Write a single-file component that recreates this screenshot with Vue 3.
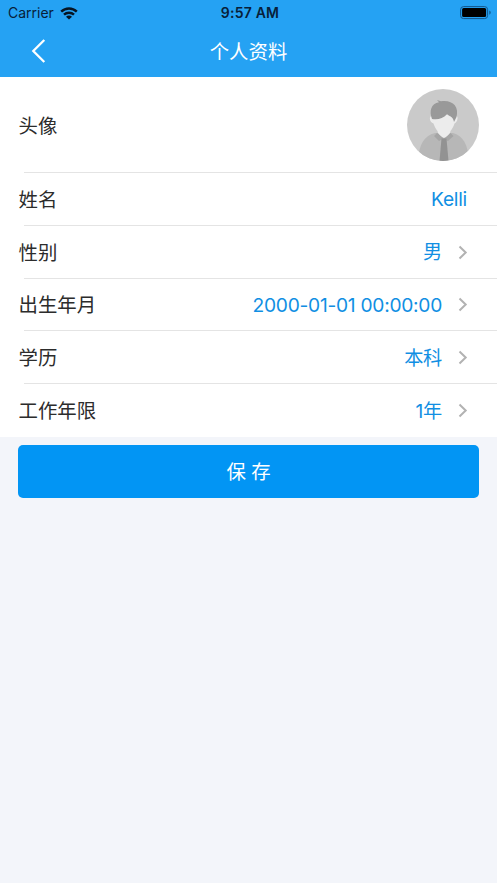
<script setup>
const rows = [
  { label: '姓名', value: 'Kelli', arrow: false },
  { label: '性别', value: '男', arrow: true },
  { label: '出生年月', value: '2000-01-01 00:00:00', arrow: true },
  { label: '学历', value: '本科', arrow: true },
  { label: '工作年限', value: '1年', arrow: true },
]
</script>

<template>
  <div class="page">
    <header class="header">
      <div class="status">
        <div class="carrier">
          <span>Carrier</span>
          <svg class="wifi" width="18" height="13" viewBox="0 0 18 13">
            <g fill="none" stroke="currentColor" stroke-width="2.4">
              <path d="M1.2 4.7C5.5 .4 12.5 .4 16.8 4.7" />
              <path d="M4 7.700C6.800 5 11.200 5 14 7.700" />
            </g>
            <path d="M6 9.800C7.700 8.200 10.300 8.200 12 9.800L9 12.400Z" fill="currentColor" />
          </svg>
        </div>
        <span class="time">9:57 AM</span>
        <div class="power">
          <svg width="32" height="14" viewBox="0 0 32 14">
            <rect x=".6" y=".6" width="27" height="12" rx="3" fill="none" stroke="#12568a" />
            <rect x="2.1" y="2.1" width="24" height="9" rx="1.500" fill="#000" />
            <path d="M29.300 4.500C31.200 5.200 31.200 8 29.300 8.700Z" fill="#12568a" />
          </svg>
        </div>
      </div>
      <div class="nav">
        <button class="back" aria-label="返回">
          <svg width="16" height="26" viewBox="0 0 16 26">
            <path d="M13.300 2L2.300 13L13.300 24" fill="none" stroke="#fff" stroke-width="2.300" />
          </svg>
        </button>
        <h1>个人资料</h1>
      </div>
    </header>

    <main class="list">
      <div class="row photo">
        <span class="label">头像</span>
        <svg class="avatar" width="72" height="72" viewBox="0 0 72 72">
          <defs>
            <clipPath id="round"><circle cx="36" cy="36" r="36" /></clipPath>
          </defs>
          <g clip-path="url(#round)">
            <rect width="72" height="72" fill="#cacaca" />
            <path d="M11 72C12 55 17 47 28 44H46C56 47 61 55 62 72Z" fill="#b7b7b7" />
            <path d="M30 44L27 47L32 52L36.500 49.500L41 52L46.500 47L43.500 44L37 48Z" fill="#a5a5a5" />
            <path d="M34.500 49.500H39.500L41.500 72H32.500Z" fill="#929292" />
            <path d="M25 27C22 26.500 22 33 26.500 34.500C27.500 38 29 40 30.500 42L31 44C32.500 46 35 48.500 37 49C39 48.500 41.500 46 43 44L43.500 42C45 40 46.500 38 47.500 34.500C51 33 51.500 26.500 49 27V22H25Z" fill="#ececec" />
            <path d="M25 30C22 22 24 14.500 32 13.200L30 11L34 12.200C45 10.500 52.500 17 49.500 28L47 33C46 28 44 28 40 25.300C36 29.500 31 31 25 30Z" fill="#999" />
          </g>
        </svg>
      </div>
      <div v-for="row in rows" :key="row.label" class="row">
        <span class="label">{{ row.label }}</span>
        <span class="value">{{ row.value }}</span>
        <svg v-if="row.arrow" class="arrow" width="10" height="15" viewBox="0 0 10 15">
          <path d="M1.500 1.500L7.700 7.500L1.500 13.500" fill="none" stroke="#b2b2b2" stroke-width="2" />
        </svg>
      </div>
    </main>
    <button class="save">保 存</button>
  </div>
</template>

<style>
body {
  background: #f3f5fa;
}
</style>

<style scoped>
.page {
  min-height: 883px;
  background: #f3f5fa;
  font-family: Inter, "Noto Sans CJK SC", sans-serif;
}
.header {
  height: 77px;
  background: #25a2f3;
}
.status {
  display: grid;
  grid-template-columns: 1fr auto 1fr;
  align-items: center;
  height: 26px;
  padding: 0 5px 0 8px;
  color: #082039;
  font-size: 14px;
  line-height: 26px;
}
.carrier {
  display: flex;
  align-items: center;
  gap: 6px;
}
.wifi {
  color: #061524;
}
.time {
  font-weight: 600;
  letter-spacing: 0.2px;
}
.power {
  display: flex;
  justify-content: flex-end;
}
.nav {
  display: grid;
  grid-template-columns: 64px 1fr 64px;
  align-items: center;
  height: 50px;
}
.back {
  display: flex;
  padding: 0 0 1px 31px;
  border: 0;
  background: none;
}
h1 {
  margin: 0;
  padding-top: 1px;
  color: #fff;
  font-size: 19.4px;
  font-weight: 400;
  line-height: 50px;
  text-align: center;
}
.list {
  background: #fff;
}
.row {
  display: flex;
  align-items: center;
  box-sizing: border-box;
  height: 52.8px;
  padding: 0 30px 0 18.5px;
  background: linear-gradient(#e4e4e4, #e4e4e4) 24px 100% / 100% 1px no-repeat;
}
.row:last-child {
  background: none;
}
.photo {
  height: 96px;
  padding-right: 18px;
}
.label {
  flex: 1;
  padding-top: 1px;
  color: #2c2c2c;
  font-size: 19.4px;
  line-height: 28px;
}
.value {
  color: #118fe3;
  font-size: 19.2px;
  letter-spacing: -0.27px;
  line-height: 28px;
}
.arrow {
  margin-left: 16px;
  margin-right: -1px;
}
.save {
  display: block;
  width: calc(100% - 36px);
  height: 53px;
  margin: 8px 18px 0;
  padding: 0 0 2px;
  border: 0;
  border-radius: 5px;
  background: #0295f4;
  color: #fff;
  font: inherit;
  font-size: 19.4px;
}
</style>
